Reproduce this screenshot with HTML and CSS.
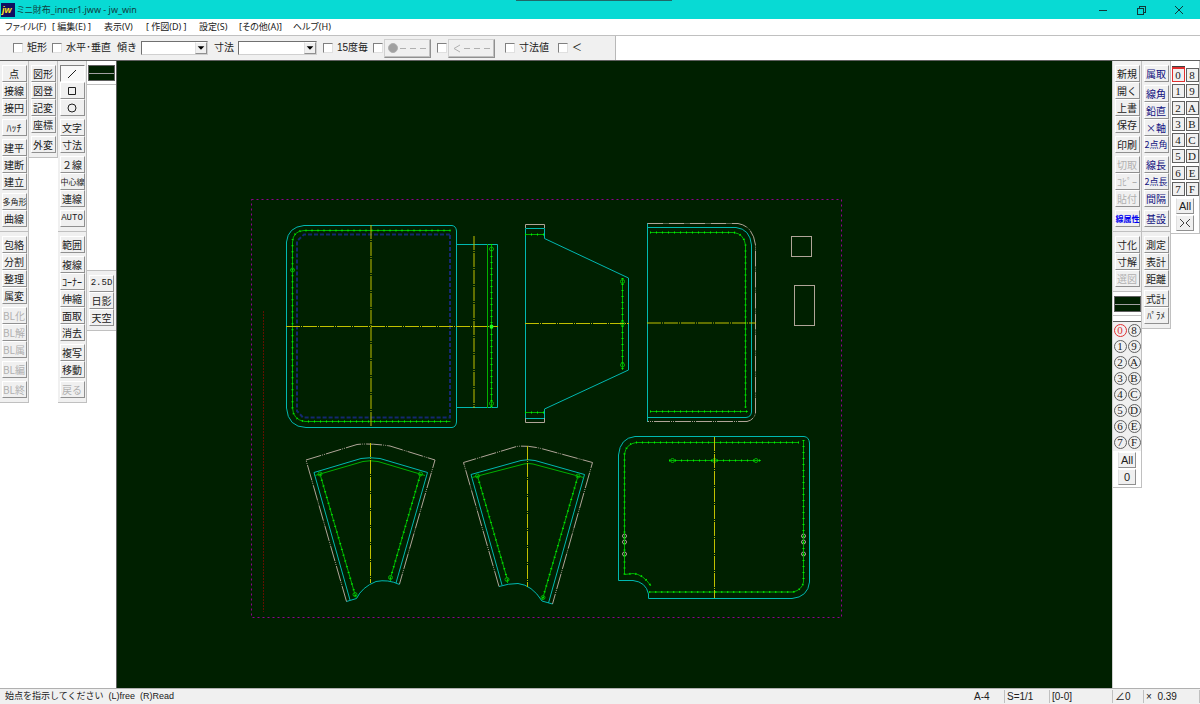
FILE: index.html
```html
<!DOCTYPE html>
<html lang="ja">
<head>
<meta charset="utf-8">
<title>ミニ財布_inner1.jww - jw_win</title>
<link rel="stylesheet" href="styles.css">
</head>
<body>
<header class="titlebar">
  <svg class="logo" viewBox="0 0 14 14" aria-hidden="true"><rect width="14" height="14" fill="#101060"/><text x="1" y="10" class="logo-text">jw</text></svg>
  <h1 class="title">ミニ財布_inner1.jww - jw_win</h1>
  <div class="grip"></div>
  <button class="win" aria-label="最小化"><svg viewBox="0 0 10 10"><path d="M1 5.5H9"/></svg></button>
  <button class="win" aria-label="元に戻す"><svg viewBox="0 0 10 10"><path d="M1.5 3.5H7.5V9.5H1.5ZM3.5 3.5V1.5H9.5V7.5H7.5"/></svg></button>
  <button class="win" aria-label="閉じる"><svg viewBox="0 0 10 10"><path d="M1 1L9 9M9 1L1 9" shape-rendering="auto"/></svg></button>
</header>
<nav class="menu">
  <a href="#">ファイル(F)</a><a href="#">[ 編集(E) ]</a><a href="#">表示(V)</a><a href="#">[ 作図(D) ]</a><a href="#">設定(S)</a><a href="#">[その他(A)]</a><a href="#">ヘルプ(H)</a>
</nav>
<div class="options">
  <form class="option-bar">
    <label><input type="checkbox">矩形</label>
    <label><input type="checkbox">水平･垂直</label>
    <label>傾き<span class="combo"><select></select><svg viewBox="0 0 12 12"><path d="M2 4H10L6 8Z"/></svg></span></label>
    <label>寸法<span class="combo"><select></select><svg viewBox="0 0 12 12"><path d="M2 4H10L6 8Z"/></svg></span></label>
    <label><input type="checkbox">15度毎</label>
    <div class="pair"><input type="checkbox" aria-label="端点"><button type="button" class="style-btn" aria-label="●---" disabled><svg viewBox="0 0 40 12"><circle cx="5" cy="6" r="4.500" fill="#a0a0a0"/><path d="M12 6.500H18M22 6.500H28M32 6.500H38"/></svg></button></div>
    <div class="pair"><input type="checkbox" aria-label="矢印"><button type="button" class="style-btn" aria-label="&lt;---" disabled><svg viewBox="0 0 40 12"><path d="M8 3L2 6.500L8 10M12 6.500H18M22 6.500H28M32 6.500H38"/></svg></button></div>
    <label><input type="checkbox">寸法値</label>
    <label><input type="checkbox">＜</label>
  </form>
</div>
<main class="work">
  <aside class="tools">
    <div class="col">
      <section class="panel">
        <div class="group"><button>点</button><button>接線</button><button>接円</button></div>
        <div class="group"><button>ﾊｯﾁ</button></div>
        <div class="group"><button>建平</button><button>建断</button><button>建立</button></div>
        <div class="group"><button class="tight">多角形</button><button>曲線</button></div>
      </section>
      <section class="panel">
        <div class="group"><button>包絡</button><button>分割</button><button>整理</button><button>属変</button></div>
        <div class="group"><button disabled>BL化</button><button disabled>BL解</button><button disabled>BL属</button></div>
        <div class="group"><button disabled>BL編</button></div>
        <div class="group"><button disabled>BL終</button></div>
      </section>
    </div>
    <div class="col">
      <section class="panel">
        <div class="group"><button>図形</button><button>図登</button><button>記変</button><button>座標</button></div>
        <div class="group"><button>外変</button></div>
      </section>
    </div>
    <div class="col">
      <section class="panel">
        <div class="group">
          <button class="pressed" aria-label="線"><svg viewBox="0 0 12 12"><path d="M2 10L10 2"/></svg></button>
          <button aria-label="矩形"><svg viewBox="0 0 12 12"><path d="M2.5 2.5H9.5V9.5H2.5Z"/></svg></button>
          <button aria-label="円"><svg viewBox="0 0 12 12"><circle cx="6" cy="6" r="4"/></svg></button>
        </div>
        <div class="group"><button>文字</button><button>寸法</button></div>
        <div class="group"><button>２線</button><button class="tight">中心線</button><button>連線</button></div>
        <div class="group"><button class="mono">AUTO</button></div>
      </section>
      <section class="panel">
        <div class="group"><button>範囲</button></div>
        <div class="group"><button>複線</button><button>ｺｰﾅｰ</button><button>伸縮</button><button>面取</button><button>消去</button></div>
        <div class="group"><button>複写</button><button>移動</button></div>
        <div class="group"><button disabled>戻る</button></div>
      </section>
    </div>
    <div class="col last">
      <section class="panel line-panel"><button class="swatch" aria-label="線属性"></button></section>
      <section class="panel view-panel">
        <div class="group"><button class="mono">2.5D</button><button>日影</button><button>天空</button></div>
      </section>
    </div>
  </aside>

  <svg class="canvas" viewBox="117 61 995 627" preserveAspectRatio="xMinYMin" role="img" aria-label="ミニ財布 図面">
    <rect class="page" x="251.5" y="199.5" width="590" height="418"/>
    <path class="brown" d="M263.5 311V612"/>
    <g class="cyan">
      <path d="M304 225.5H452Q456 226 456.5 231V422Q456 427 452 427.5H306Q288 427 286.5 408V242Q288 227 304 225.5Z"/>
      <path d="M456 244.5H497.5V407.5H456"/>
      <path d="M525.5 228.5H544.5V238.5L628.5 278V370L544.5 409V418.5H525.5Z"/>
      <path d="M647.5 223V422M647.5 227.5H736Q750 229 751.5 245V412Q751 417 746 417.5H647.5"/>
      <path d="M350 600L314 472.5L361 458.5Q370 457 380 458.5L427.5 472.5L396 583M346.5 601.5L356.5 598.5Q362 587 376 581.5Q388 579 399.5 584.5"/>
      <path d="M502 585L471 474.5L521 460.5Q528 459 535 460.5L584.5 474.5L548.5 603M499 586.5Q508 583.5 518 583.5Q532 585 542 601L552.5 604"/>
      <path d="M618.5 580.5V455Q620 438 635 436.5H804Q809 437 809.5 443V582Q808 597 792 598.5H648.5V594Q646 582 633 580.5Z"/>
    </g>
    <g class="gray">
      <path d="M525.5 228V224.5H544.5V228M525.5 418V422.5H544.5V418"/>
      <path class="chain" d="M647.5 223.5H738Q753 226 755.5 245V413Q754 420 747 421.5H647.5"/>
      <rect x="791.5" y="236.5" width="20" height="20"/>
      <rect x="794.5" y="285.5" width="20" height="40"/>
      <path class="chain" d="M346.5 601.5L306 460L357 444.5Q370 443 390 446L435 460L399.5 584"/>
      <path class="chain" d="M499 586.5L463.5 462.5L516.5 446.5Q528 445 543 449L592.5 462.5L552.5 604"/>
      <circle cx="624.5" cy="536" r="2"/><circle cx="624.5" cy="542" r="2"/><circle cx="624.5" cy="554" r="2"/>
      <circle cx="803.5" cy="536" r="2"/><circle cx="803.5" cy="542" r="2"/><circle cx="803.5" cy="554" r="2"/>
    </g>
    <path class="blue" d="M450 234.5H304L297 241V411L303 417.5H450Z"/>
    <defs>
      <g id="seams">
        <path d="M450.5 230.5H304Q293 231 292.5 242V408Q293 420 305 421.5H450.5"/>
        <path d="M491.5 244V408M525 234.5H544M525 412.5H544M622.5 278V370"/>
        <path d="M650 232.5H734Q744 234 745.5 245V408M650 411.5H748"/>
        <path d="M320 474L355 594.5L356.5 598M420.5 474L390.5 578V581"/>
        <path d="M477.5 476L507.5 580V583M578 476L543 597.5L542 600"/>
        <path d="M799 442.5H636Q626 444 624.5 454V574.5L633 573.5Q643 574 651 586M803.5 440V582Q802 590 793 592H649"/>
        <path d="M669 460.5H761"/>
      </g>
    </defs>
    <use href="#seams" class="green"/>
    <use href="#seams" class="green-dots"/>
    <g class="green">
      <path d="M487.5 244V408M315 475.5L363 461.5Q370 460 378 461.5L425 475.5M472 477.5L524 464Q528 463 533 464L583.5 477.5"/>
      <circle cx="292.5" cy="270" r="2"/><circle cx="491.5" cy="249" r="2"/><circle cx="491.5" cy="403.5" r="2"/>
      <circle cx="622.5" cy="281.5" r="2"/><circle cx="622.5" cy="323.5" r="2"/><circle cx="622.5" cy="365" r="2"/>
      <circle cx="320" cy="474" r="2"/><circle cx="420.5" cy="474" r="2"/><circle cx="355" cy="594.5" r="2"/><circle cx="390.5" cy="577.5" r="2"/>
      <circle cx="477.5" cy="476" r="2"/><circle cx="578" cy="476" r="2"/><circle cx="507" cy="579.5" r="2"/><circle cx="543" cy="597.5" r="2"/>
      <circle cx="672.5" cy="460.5" r="2"/><circle cx="714.5" cy="460.5" r="2"/><circle cx="756" cy="460.5" r="2"/>
    </g>
    <path class="yellow" d="M371 225V427M286 326.5H498M474 236V408M525 323.5H629M647 323H756M370.5 443V583M527.5 446V587M714.5 437V598"/>
    <circle class="spot" cx="491.5" cy="326.5" r="2"/>
  </svg>

  <aside class="tools right">
    <div class="col">
      <section class="panel">
        <div class="group"><button>新規</button><button>開く</button><button>上書</button><button>保存</button></div>
        <div class="group"><button>印刷</button></div>
        <div class="group"><button disabled>切取</button><button disabled>ｺﾋﾟｰ</button><button disabled>貼付</button></div>
        <div class="group"><button class="tight attr">線属性</button></div>
      </section>
      <section class="panel">
        <div class="group"><button>寸化</button><button>寸解</button><button disabled>選図</button></div>
      </section>
      <section class="panel line-panel"><button class="swatch" aria-label="線属性"></button></section>
      <section class="panel layers round">
        <div class="layer-grid">
          <button class="current">0</button><button>8</button><button>1</button><button>9</button><button>2</button><button>A</button><button>3</button><button>B</button><button>4</button><button>C</button><button>5</button><button>D</button><button>6</button><button>E</button><button>7</button><button>F</button>
        </div>
        <button class="wide">All</button><button class="wide">0</button>
      </section>
    </div>
    <div class="col navy">
      <section class="panel">
        <div class="group"><button>属取</button></div>
        <div class="group"><button>線角</button><button>鉛直</button><button>×軸</button><button class="mixed">2点角</button></div>
        <div class="group"><button>線長</button><button class="mixed">2点長</button><button>間隔</button></div>
        <div class="group"><button>基設</button></div>
      </section>
      <section class="panel calc">
        <div class="group"><button>測定</button><button>表計</button><button>距離</button></div>
        <div class="group"><button class="calc-btn">式計</button><button class="mixed">ﾊﾟﾗﾒ</button></div>
      </section>
    </div>
    <div class="col">
      <section class="panel layers square">
        <div class="layer-grid">
          <button class="current">0</button><button>8</button><button>1</button><button>9</button><button>2</button><button>A</button><button>3</button><button>B</button><button>4</button><button>C</button><button>5</button><button>D</button><button>6</button><button>E</button><button>7</button><button>F</button>
        </div>
        <button class="wide">All</button>
        <button class="wide" aria-label="切替"><svg viewBox="0 0 14 12"><path d="M2 2L6 6L2 10M12 2L8 6L12 10"/></svg></button>
      </section>
    </div>
  </aside>
</main>
<footer class="status">
  <span class="message">始点を指示してください&nbsp; (L)free&nbsp; (R)Read</span>
  <span>A-4</span><span>S=1/1</span><span>[0-0]</span><span>∠0</span><span>×&nbsp; 0.39</span>
</footer>
</body>
</html>
```
FILE: styles.css
```css
* { box-sizing: border-box; }
html, body { height: 100%; margin: 0; }
body {
  display: flex;
  flex-direction: column;
  background: #fff;
  color: #202020;
  font: 10px/14px "Liberation Sans", "Noto Sans CJK JP", sans-serif;
  overflow: hidden;
}
button, select, input { font: inherit; color: inherit; margin: 0; padding: 0; border-radius: 0; }

/* title bar */
.titlebar {
  position: relative;
  display: flex;
  align-items: center;
  flex: 0 0 19px;
  padding: 0 2px 0 1px;
  background: #08dad4;
}
.logo { width: 14px; height: 14px; }
.logo-text { font: italic bold 9px "Liberation Sans", sans-serif; fill: #ffe820; }
.title {
  flex: 1;
  margin: 0 0 0 2px;
  font: 9px/16px "Noto Sans", "Noto Sans CJK JP", sans-serif;
  font-feature-settings: "palt";
  color: #104040;
}
.grip { position: absolute; top: 0; left: 43%; width: 13%; height: 1px; background: #206868; }
.win { display: grid; place-items: center; width: 38px; height: 19px; border: 0; background: none; }
.win svg { width: 10px; height: 10px; fill: none; stroke: #103838; shape-rendering: crispEdges; }

/* menu */
.menu {
  display: grid;
  grid-template-columns: 47px 52px 42px 53px 40px 54px auto;
  flex: 0 0 17px;
  align-items: center;
  padding-left: 5px;
  border-bottom: 1px solid #c0c0c0;
  font-family: "Noto Sans", "Noto Sans CJK JP", sans-serif;
  font-size: 9px;
  font-feature-settings: "palt";
}
.menu a { color: #202020; text-decoration: none; white-space: nowrap; }

/* option bar */
.options { flex: 0 0 24px; display: flex; }
.option-bar {
  display: grid;
  grid-template-columns: 39px 65px 97px 109px 50px 64px 68px 53px 57px;
  align-items: center;
  padding-left: 13px;
  background: #f0f0f0;
  border-right: 1px solid #b8b8b8;
  white-space: nowrap;
  font-size: 10px;
}
.option-bar label, .pair { display: flex; align-items: center; gap: 4px; }
.option-bar .pair { gap: 1px; }
.option-bar input {
  appearance: none;
  flex: 0 0 10px;
  height: 10px;
  background: #fff;
  border: 1px solid #e0e0e0;
  border-top-color: #808080;
  border-left-color: #808080;
}
.combo { position: relative; flex: 1; margin-right: 6px; display: flex; }
.combo select {
  appearance: none;
  width: 100%;
  height: 14px;
  background: #fff;
  border: 1px solid #d0d0d0;
  border-top-color: #707070;
  border-left-color: #707070;
}
.combo svg {
  position: absolute;
  top: 1px;
  right: 1px;
  width: 12px;
  height: 12px;
  background: #f0f0f0;
  border: 1px solid #909090;
  border-top-color: #fff;
  border-left-color: #e0e0e0;
  pointer-events: none;
}
.style-btn {
  display: grid;
  place-items: center;
  width: 47px;
  height: 19px;
  background: #f0f0f0;
  border: 1px solid #909090;
  border-top-color: #d0d0d0;
  border-left-color: #d0d0d0;
  box-shadow: inset -1px -1px #c0c0c0;
}
.style-btn svg { width: 40px; height: 12px; fill: none; stroke: #b0b0b0; }

/* work area */
.work { flex: 1; display: flex; min-height: 0; border-top: 1px solid #606060; }
.tools { display: flex; flex: none; border-right: 1px solid #606060; }
.tools.right { border-right: 0; border-left: 1px solid #d0d0d0; }
.col { width: 29px; flex: none; }
.panel {
  display: flex;
  flex-direction: column;
  align-items: center;
  gap: 3px;
  padding: 4px 2px;
  background: #f0f0f0;
  border-right: 1px solid #c0c0c0;
  border-bottom: 1px solid #c0c0c0;
}
.group { display: flex; flex-direction: column; }
.group button {
  display: grid;
  place-items: center;
  width: 25px;
  height: 17px;
  background: #f0f0f0;
  border: 1px solid #909090;
  border-top-color: #fff;
  border-left-color: #fff;
  font: 10px/13px "Noto Sans CJK JP", sans-serif;
  white-space: nowrap;
}
.group button:disabled { color: #b0b0b0; }
.group .tight { font-size: 8px; }
.group .mixed { font-size: 9px; }
.group .mono { font: 9px/13px "Liberation Mono", monospace; }
.group .attr { color: #0000f0; font-weight: bold; }
.group svg { width: 12px; height: 12px; fill: none; stroke: #202020; }
.group .pressed { background: #f8f8f8; border-color: #808080 #fff #fff #808080; }
.navy .group button { color: #101080; }
.navy .calc .group button { color: #202020; }
.col.last .panel { border-right: 0; }
.line-panel { background: #fff; padding: 4px 1px 3px; }
.swatch {
  width: 27px;
  height: 16px;
  border: 1px solid #606060;
  background: linear-gradient(#a0a0a0, #a0a0a0) center / 100% 1px no-repeat #002000;
}
.col.last .view-panel { margin-top: 185px; border-top: 1px solid #c0c0c0; }
.canvas { flex: 1; min-width: 0; background: #002000; }

/* layer buttons */
.layers { background: #fff; padding: 6px 0 2px; gap: 1px; }
.round { padding-top: 5px; }
.layer-grid { display: grid; grid-template: repeat(8, 1fr) / 1fr 1fr; width: 100%; height: 130px; }
.layer-grid button {
  width: 13px;
  height: 14px;
  background: #f0f0f0;
  border: 1px solid #606060;
  font: 11px/12px "Liberation Serif", serif;
  align-self: center;
  justify-self: center;
}
.round .layer-grid { background: #f0f0f0; border-top: 1px solid #606060; }
.round .layer-grid button { height: 13px; line-height: 11px; border-radius: 50%; }
.layer-grid .current { border-color: #e03030; box-shadow: 0 -1px #e03030, 0 -2px #404040; }
.round .layer-grid .current { color: #e03030; box-shadow: none; }
.wide {
  display: grid;
  place-items: center;
  width: 18px;
  height: 16px;
  background: #f0f0f0;
  border: 1px solid #909090;
  border-top-color: #fff;
  border-left-color: #e0e0e0;
  font-size: 11px;
}
.wide svg { width: 14px; height: 12px; fill: none; stroke: #404040; }

/* drawing */
.page, .brown, .cyan, .gray, .blue, .green, .green-dots, .yellow { fill: none; stroke-width: 1; }
.page { stroke: #900090; stroke-dasharray: 2 3; }
.brown { stroke: #601000; stroke-dasharray: 2 1; }
.cyan { stroke: #00b8b0; }
.gray { stroke: #b0a498; }
.chain { stroke-dasharray: 16 1 1 1 1 1; }
.blue { stroke: #1c2ca0; stroke-dasharray: 4 2; stroke-width: 2; stroke-opacity: .7; }
.green { stroke: #00b000; }
.green-dots { stroke: #00f000; stroke-width: 2; stroke-dasharray: 1 5; }
.yellow { stroke: #c0c000; stroke-dasharray: 14 1 1 1; }
.spot { fill: #20ff20; }

/* status bar */
.status {
  display: grid;
  grid-template-columns: 1fr 33px 45px 63px 31px 56px;
  flex: 0 0 16px;
  align-items: center;
  background: #f0f0f0;
  border-top: 1px solid #b0b0b0;
  white-space: nowrap;
}
.status span { padding-left: 2px; border-right: 1px solid #c0c0c0; line-height: 13px; }
.status .message { padding-left: 5px; border-right: 0; font-size: 9px; }
```
